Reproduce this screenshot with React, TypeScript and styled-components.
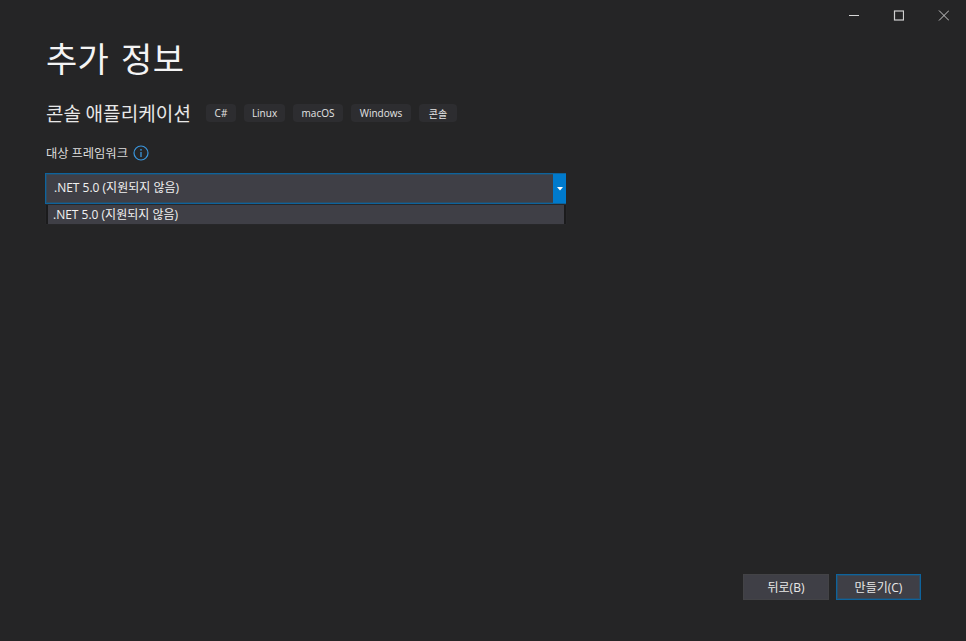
import * as React from 'react';
import styled, { createGlobalStyle } from 'styled-components';

const GlobalStyle = createGlobalStyle`
    html, body {
        margin: 0;
        height: 100%;
        background: #252526;
    }
    #root {
        height: 100%;
    }
`;

const FONT = `"Noto Sans CJK KR", "Noto Sans", sans-serif`;
const LATIN = `"Open Sans", "Noto Sans CJK KR", sans-serif`;
const FOCUS = '#0e639c';

const Page = styled.div`
    display: flex;
    flex-direction: column;
    width: 966px;
    height: 641px;
    box-sizing: border-box;
    overflow: hidden;
    background: #252526;
    color: #f1f1f1;
    font-family: ${LATIN};
`;

const TitleBar = styled.div`
    display: flex;
    justify-content: flex-end;
    height: 30px;
`;

const WindowButton = styled.div`
    display: flex;
    align-items: center;
    justify-content: center;
    width: 45px;
    height: 30px;
`;

const Content = styled.div`
    display: flex;
    flex-direction: column;
    flex: 1;
    padding: 0 45px 0 46px;
`;

const Title = styled.h1`
    margin: 3px 0 0;
    height: 50px;
    font-family: ${FONT};
    font-size: 34px;
    word-spacing: 4px;
    letter-spacing: 0.3px;
    line-height: 50px;
    font-weight: 400;
    color: #f4f4f4;
`;

const SubtitleRow = styled.div`
    display: flex;
    align-items: center;
    margin-top: 15px;
    height: 30px;
`;

const Subtitle = styled.h2`
    margin: 0 15px 0 0;
    font-family: ${FONT};
    font-size: 19px;
    letter-spacing: 0.1px;
    line-height: 30px;
    font-weight: 400;
    color: #e8e8e8;
`;

const Tags = styled.div`
    display: flex;
    gap: 8px;
`;

const Tag = styled.span<{ width: number }>`
    display: flex;
    align-items: center;
    justify-content: center;
    width: ${(props) => props.width}px;
    height: 18px;
    border-radius: 4px;
    background: #2d2d30;
    font-size: 10px;
    color: #e4e4e4;
`;

const FieldLabel = styled.div`
    display: flex;
    align-items: center;
    gap: 5px;
    margin-top: 15px;
    height: 20px;
    font-family: ${FONT};
    font-size: 12.3px;
    color: #dcdcdc;
`;

const ComboWrap = styled.div`
    position: relative;
    width: 521px;
    margin: 10px 0 0 -1px;
`;

const Combo = styled.div`
    display: flex;
    height: 31px;
    box-sizing: border-box;
    border: 1px solid ${FOCUS};
    box-shadow: inset 0 0 0 1px rgba(14, 99, 156, 0.35);
    background: #3f3f46;
`;

const ComboValue = styled.div`
    flex: 1;
    padding-left: 8px;
    font-size: 12px;
    line-height: 28px;
    color: #f1f1f1;
`;

const ComboArrow = styled.div`
    display: flex;
    align-items: center;
    justify-content: center;
    width: 13px;
    margin: 0 -1px 0 0;
    background: #007acc;
`;

const DropList = styled.div`
    position: absolute;
    top: 32px;
    left: 1px;
    right: 0;
    height: 19px;
    box-sizing: border-box;
    overflow: hidden;
    border-left: 2px solid #1b1b1c;
    border-right: 2px solid #1b1b1c;
    background: #3f3f46;
    box-shadow: 0 0 0 0.5px #2b2b2d;
    padding-left: 5px;
    font-size: 12px;
    line-height: 20px;
    color: #f1f1f1;
`;

const Footer = styled.div`
    display: flex;
    justify-content: flex-end;
    gap: 7px;
    margin-top: auto;
    margin-bottom: 41px;
`;

const FooterButton = styled.button<{ primary?: boolean }>`
    width: ${(props) => (props.primary ? '85px' : '86px')};
    height: 26px;
    box-sizing: border-box;
    padding: 0;
    border: 1px solid ${(props) => (props.primary ? FOCUS : '#434346')};
    box-shadow: ${(props) => (props.primary ? 'inset 0 0 0 1px rgba(14, 99, 156, 0.35)' : 'none')};
    background: #3f3f46;
    color: #e8e8e8;
    font-family: ${LATIN};
    font-size: 12px;
`;

export default function App() {
    return (
        <Page>
            <GlobalStyle />
            <TitleBar>
                <WindowButton>
                    <svg width="11" height="11" viewBox="0 0 11 11">
                        <path d="M1 5.5H11" stroke="#d8d8d8" fill="none" />
                    </svg>
                </WindowButton>
                <WindowButton>
                    <svg width="11" height="11" viewBox="0 0 11 11">
                        <rect x="1.5" y="1" width="9" height="9" stroke="#d0d0d0" strokeWidth="1.2" fill="none" />
                    </svg>
                </WindowButton>
                <WindowButton>
                    <svg width="11" height="11" viewBox="0 0 11 11">
                        <path d="M1 0.5L11 10.5M11 0.5L1 10.5" stroke="#c8c8c8" fill="none" />
                    </svg>
                </WindowButton>
            </TitleBar>
            <Content>
                <Title>추가 정보</Title>
                <SubtitleRow>
                    <Subtitle>콘솔 애플리케이션</Subtitle>
                    <Tags>
                        <Tag width={30}>C#</Tag>
                        <Tag width={41}>Linux</Tag>
                        <Tag width={50}>macOS</Tag>
                        <Tag width={60}>Windows</Tag>
                        <Tag width={38}>콘솔</Tag>
                    </Tags>
                </SubtitleRow>
                <FieldLabel>
                    대상 프레임워크
                    <svg width="16" height="16" viewBox="0 0 16 16">
                        <circle cx="8" cy="8" r="7" stroke="#3a96dd" strokeWidth="1.2" fill="none" />
                        <path d="M8 7V12" stroke="#3a96dd" strokeWidth="1.3" />
                        <circle cx="8" cy="4.8" r="0.9" fill="#3a96dd" />
                    </svg>
                </FieldLabel>
                <ComboWrap>
                    <Combo>
                        <ComboValue>.NET 5.0 (지원되지 않음)</ComboValue>
                        <ComboArrow>
                            <svg width="6" height="4" viewBox="0 0 6 4">
                                <path d="M0 0H6L3 3.5Z" fill="#ffffff" />
                            </svg>
                        </ComboArrow>
                    </Combo>
                    <DropList>.NET 5.0 (지원되지 않음)</DropList>
                </ComboWrap>
                <Footer>
                    <FooterButton>뒤로(B)</FooterButton>
                    <FooterButton primary>만들기(C)</FooterButton>
                </Footer>
            </Content>
        </Page>
    );
}
